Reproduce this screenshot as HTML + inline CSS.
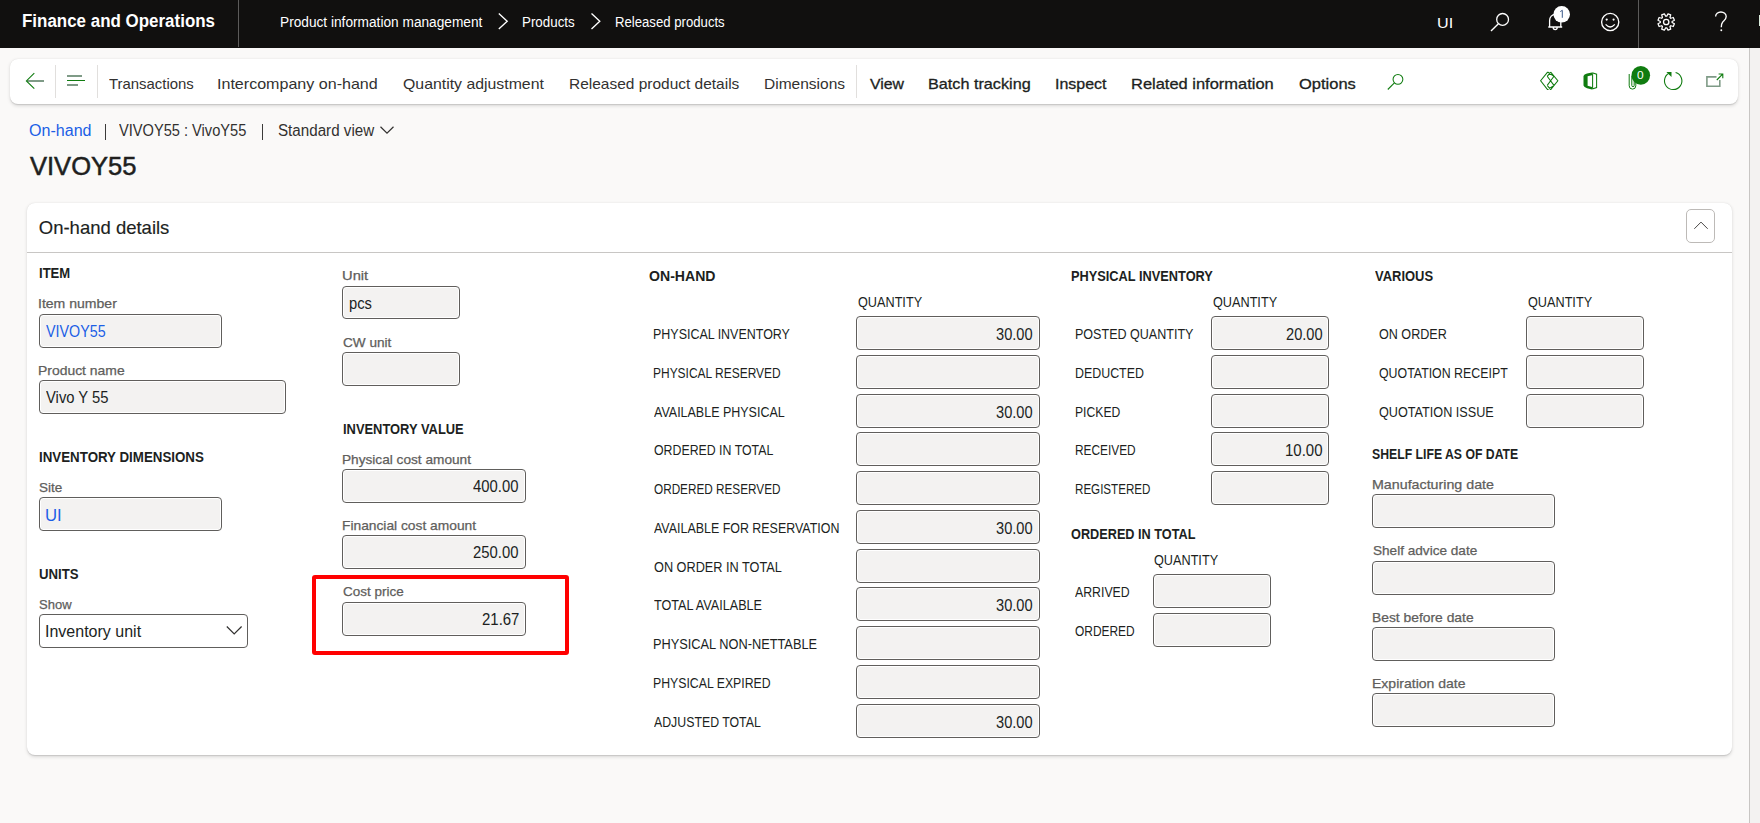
<!DOCTYPE html>
<html><head><meta charset="utf-8"><title>On-hand</title>
<style>
html,body{margin:0;padding:0;}
body{width:1760px;height:823px;overflow:hidden;position:relative;background:#faf9f8;font-family:"Liberation Sans", sans-serif;}
.t{position:absolute;line-height:0;white-space:pre;transform-origin:0 0;}
svg{z-index:6}
</style></head><body>
<div style="position:absolute;left:0px;top:0px;width:1760px;height:48px;background:#11100f"></div>
<div style="position:absolute;left:238px;top:0px;width:1px;height:47px;background:#5c5b5a"></div>
<div style="position:absolute;left:1638px;top:0px;width:1px;height:48px;background:#5c5b5a"></div>
<div style="position:absolute;left:1758.6px;top:15px;width:1.4px;height:10.7px;background:#d8eadb"></div>
<div style="position:absolute;left:1749px;top:48px;width:1px;height:775px;background:#c8c6c4"></div>
<div style="position:absolute;left:1750px;top:48px;width:10px;height:775px;background:#f3f2f1"></div>
<div style="position:absolute;left:10px;top:58.5px;width:1728px;height:45.5px;background:#fff;border-radius:8px;box-shadow:0 1.6px 3.6px rgba(0,0,0,.13),0 0.3px 0.9px rgba(0,0,0,.11)"></div>
<div style="position:absolute;left:55px;top:65px;width:1px;height:33px;background:#e1dfdd"></div>
<div style="position:absolute;left:97px;top:65px;width:1px;height:33px;background:#e1dfdd"></div>
<div style="position:absolute;left:856px;top:65px;width:1px;height:33px;background:#e1dfdd"></div>
<div style="position:absolute;left:27px;top:80.1px;width:17px;height:1.6px;background:#7f9b87"></div>
<div style="position:absolute;left:67px;top:75.2px;width:14.8px;height:1.8px;background:#7f9b87"></div>
<div style="position:absolute;left:67px;top:80px;width:18px;height:1.1px;background:#107c10"></div>
<div style="position:absolute;left:67px;top:84.1px;width:11.3px;height:1.8px;background:#7f9b87"></div>
<div style="position:absolute;left:105px;top:124px;width:1.2px;height:16px;background:#3b3a39"></div>
<div style="position:absolute;left:262px;top:124px;width:1.2px;height:16px;background:#3b3a39"></div>
<div style="position:absolute;left:27px;top:203px;width:1705px;height:552px;background:#fff;border-radius:8px;box-shadow:0 1.6px 3.6px rgba(0,0,0,.13),0 0.3px 0.9px rgba(0,0,0,.11)"></div>
<div style="position:absolute;left:27px;top:252px;width:1705px;height:1px;background:#c8c6c4"></div>
<div style="position:absolute;left:1686px;top:209px;width:29px;height:34px;border:1px solid #bdbab7;border-radius:5px;box-sizing:border-box"></div>
<div style="position:absolute;left:39px;top:314px;width:183px;height:34px;background:#f3f2f1;border:1px solid #605e5c;border-radius:4px;box-sizing:border-box;box-shadow:inset 0 0 0 1px #fff"></div>
<div style="position:absolute;left:39px;top:380px;width:247px;height:34px;background:#f3f2f1;border:1px solid #605e5c;border-radius:4px;box-sizing:border-box;box-shadow:inset 0 0 0 1px #fff"></div>
<div style="position:absolute;left:39px;top:497px;width:183px;height:34px;background:#f3f2f1;border:1px solid #605e5c;border-radius:4px;box-sizing:border-box;box-shadow:inset 0 0 0 1px #fff"></div>
<div style="position:absolute;left:39px;top:614px;width:209px;height:34px;background:#fff;border:1px solid #605e5c;border-radius:4px;box-sizing:border-box;box-shadow:inset 0 0 0 1px #fff"></div>
<div style="position:absolute;left:342px;top:286px;width:118px;height:33px;background:#f3f2f1;border:1px solid #605e5c;border-radius:4px;box-sizing:border-box;box-shadow:inset 0 0 0 1px #fff"></div>
<div style="position:absolute;left:342px;top:352px;width:118px;height:34px;background:#f3f2f1;border:1px solid #605e5c;border-radius:4px;box-sizing:border-box;box-shadow:inset 0 0 0 1px #fff"></div>
<div style="position:absolute;left:342px;top:469px;width:184px;height:34px;background:#f3f2f1;border:1px solid #605e5c;border-radius:4px;box-sizing:border-box;box-shadow:inset 0 0 0 1px #fff"></div>
<div style="position:absolute;left:342px;top:535px;width:184px;height:34px;background:#f3f2f1;border:1px solid #605e5c;border-radius:4px;box-sizing:border-box;box-shadow:inset 0 0 0 1px #fff"></div>
<div style="position:absolute;left:342px;top:602px;width:184px;height:34px;background:#f3f2f1;border:1px solid #605e5c;border-radius:4px;box-sizing:border-box;box-shadow:inset 0 0 0 1px #fff"></div>
<div style="position:absolute;left:312.2px;top:575.2px;width:256.5px;height:79.4px;border:4.3px solid #ff0000;border-radius:3px;box-sizing:border-box;z-index:8"></div>
<div style="position:absolute;left:856px;top:316px;width:184px;height:34px;background:#f3f2f1;border:1px solid #605e5c;border-radius:4px;box-sizing:border-box;box-shadow:inset 0 0 0 1px #fff"></div>
<div style="position:absolute;left:856px;top:355px;width:184px;height:34px;background:#f3f2f1;border:1px solid #605e5c;border-radius:4px;box-sizing:border-box;box-shadow:inset 0 0 0 1px #fff"></div>
<div style="position:absolute;left:856px;top:394px;width:184px;height:34px;background:#f3f2f1;border:1px solid #605e5c;border-radius:4px;box-sizing:border-box;box-shadow:inset 0 0 0 1px #fff"></div>
<div style="position:absolute;left:856px;top:432px;width:184px;height:34px;background:#f3f2f1;border:1px solid #605e5c;border-radius:4px;box-sizing:border-box;box-shadow:inset 0 0 0 1px #fff"></div>
<div style="position:absolute;left:856px;top:471px;width:184px;height:34px;background:#f3f2f1;border:1px solid #605e5c;border-radius:4px;box-sizing:border-box;box-shadow:inset 0 0 0 1px #fff"></div>
<div style="position:absolute;left:856px;top:510px;width:184px;height:34px;background:#f3f2f1;border:1px solid #605e5c;border-radius:4px;box-sizing:border-box;box-shadow:inset 0 0 0 1px #fff"></div>
<div style="position:absolute;left:856px;top:549px;width:184px;height:34px;background:#f3f2f1;border:1px solid #605e5c;border-radius:4px;box-sizing:border-box;box-shadow:inset 0 0 0 1px #fff"></div>
<div style="position:absolute;left:856px;top:587px;width:184px;height:34px;background:#f3f2f1;border:1px solid #605e5c;border-radius:4px;box-sizing:border-box;box-shadow:inset 0 0 0 1px #fff"></div>
<div style="position:absolute;left:856px;top:626px;width:184px;height:34px;background:#f3f2f1;border:1px solid #605e5c;border-radius:4px;box-sizing:border-box;box-shadow:inset 0 0 0 1px #fff"></div>
<div style="position:absolute;left:856px;top:665px;width:184px;height:34px;background:#f3f2f1;border:1px solid #605e5c;border-radius:4px;box-sizing:border-box;box-shadow:inset 0 0 0 1px #fff"></div>
<div style="position:absolute;left:856px;top:704px;width:184px;height:34px;background:#f3f2f1;border:1px solid #605e5c;border-radius:4px;box-sizing:border-box;box-shadow:inset 0 0 0 1px #fff"></div>
<div style="position:absolute;left:1211px;top:316px;width:118px;height:34px;background:#f3f2f1;border:1px solid #605e5c;border-radius:4px;box-sizing:border-box;box-shadow:inset 0 0 0 1px #fff"></div>
<div style="position:absolute;left:1211px;top:355px;width:118px;height:34px;background:#f3f2f1;border:1px solid #605e5c;border-radius:4px;box-sizing:border-box;box-shadow:inset 0 0 0 1px #fff"></div>
<div style="position:absolute;left:1211px;top:394px;width:118px;height:34px;background:#f3f2f1;border:1px solid #605e5c;border-radius:4px;box-sizing:border-box;box-shadow:inset 0 0 0 1px #fff"></div>
<div style="position:absolute;left:1211px;top:432px;width:118px;height:34px;background:#f3f2f1;border:1px solid #605e5c;border-radius:4px;box-sizing:border-box;box-shadow:inset 0 0 0 1px #fff"></div>
<div style="position:absolute;left:1211px;top:471px;width:118px;height:34px;background:#f3f2f1;border:1px solid #605e5c;border-radius:4px;box-sizing:border-box;box-shadow:inset 0 0 0 1px #fff"></div>
<div style="position:absolute;left:1153px;top:574px;width:118px;height:34px;background:#f3f2f1;border:1px solid #605e5c;border-radius:4px;box-sizing:border-box;box-shadow:inset 0 0 0 1px #fff"></div>
<div style="position:absolute;left:1153px;top:613px;width:118px;height:34px;background:#f3f2f1;border:1px solid #605e5c;border-radius:4px;box-sizing:border-box;box-shadow:inset 0 0 0 1px #fff"></div>
<div style="position:absolute;left:1526px;top:316px;width:118px;height:34px;background:#f3f2f1;border:1px solid #605e5c;border-radius:4px;box-sizing:border-box;box-shadow:inset 0 0 0 1px #fff"></div>
<div style="position:absolute;left:1526px;top:355px;width:118px;height:34px;background:#f3f2f1;border:1px solid #605e5c;border-radius:4px;box-sizing:border-box;box-shadow:inset 0 0 0 1px #fff"></div>
<div style="position:absolute;left:1526px;top:394px;width:118px;height:34px;background:#f3f2f1;border:1px solid #605e5c;border-radius:4px;box-sizing:border-box;box-shadow:inset 0 0 0 1px #fff"></div>
<div style="position:absolute;left:1372px;top:494px;width:183px;height:34px;background:#f3f2f1;border:1px solid #605e5c;border-radius:4px;box-sizing:border-box;box-shadow:inset 0 0 0 1px #fff"></div>
<div style="position:absolute;left:1372px;top:561px;width:183px;height:34px;background:#f3f2f1;border:1px solid #605e5c;border-radius:4px;box-sizing:border-box;box-shadow:inset 0 0 0 1px #fff"></div>
<div style="position:absolute;left:1372px;top:627px;width:183px;height:34px;background:#f3f2f1;border:1px solid #605e5c;border-radius:4px;box-sizing:border-box;box-shadow:inset 0 0 0 1px #fff"></div>
<div style="position:absolute;left:1372px;top:693px;width:183px;height:34px;background:#f3f2f1;border:1px solid #605e5c;border-radius:4px;box-sizing:border-box;box-shadow:inset 0 0 0 1px #fff"></div>
<svg style="position:absolute;left:0;top:0;z-index:6" width="1760" height="823" viewBox="0 0 1760 823"><path d="M498.8 13.6 L507.2 21.3 L498.8 29 M591.5 13.6 L599.8 21.3 L591.5 29" fill="none" stroke="#ffffff" stroke-width="1.35"/><circle cx="1502.6" cy="19.4" r="5.9" fill="none" stroke="#ffffff" stroke-width="1.3"/><path d="M1498.4 23.7 L1491 31" stroke="#ffffff" stroke-width="1.4"/><path d="M1548.3 27 H1562.2 M1549.6 27 V20.5 A5.6 6.2 0 0 1 1560.8 20.5 V27 M1553.2 27.6 A2 2 0 0 0 1557.2 27.6" fill="none" stroke="#ffffff" stroke-width="1.3"/><circle cx="1561.7" cy="14.3" r="8.3" fill="#ffffff"/><path d="M1560.3 11.6 L1562.3 10.3 V17.8" fill="none" stroke="#3d5a8a" stroke-width="1"/><circle cx="1610.2" cy="22" r="8.6" fill="none" stroke="#ffffff" stroke-width="1.35"/><circle cx="1606.7" cy="19.6" r="1.1" fill="#ffffff"/><circle cx="1613.6" cy="19.6" r="1.1" fill="#ffffff"/><path d="M1605.6 24.4 Q1610.2 29.6 1614.8 24.4" fill="none" stroke="#ffffff" stroke-width="1.3"/><path d="M1666.77 16.13 L1668.02 13.80 L1670.71 14.92 L1669.95 17.45 L1670.75 18.25 L1673.28 17.49 L1674.40 20.18 L1672.07 21.43 L1672.07 22.57 L1674.40 23.82 L1673.28 26.51 L1670.75 25.75 L1669.95 26.55 L1670.71 29.08 L1668.02 30.20 L1666.77 27.87 L1665.63 27.87 L1664.38 30.20 L1661.69 29.08 L1662.45 26.55 L1661.65 25.75 L1659.12 26.51 L1658.00 23.82 L1660.33 22.57 L1660.33 21.43 L1658.00 20.18 L1659.12 17.49 L1661.65 18.25 L1662.45 17.45 L1661.69 14.92 L1664.38 13.80 L1665.63 16.13 Z" fill="none" stroke="#ffffff" stroke-width="1.25" stroke-linejoin="round"/><circle cx="1666.2" cy="22" r="2.7" fill="none" stroke="#ffffff" stroke-width="1.3"/><path d="M1715.6 16.6 A5.3 4.6 0 0 1 1726.2 16.6 C1726.2 19.6 1724 20.6 1722.6 22.2 C1721.6 23.4 1721.3 24.4 1721.3 27.2" fill="none" stroke="#ffffff" stroke-width="1.35"/><circle cx="1721.3" cy="30.2" r="0.95" fill="#ffffff"/><path d="M34.3 73.2 L26.4 80.9 L34.3 88.6" fill="none" stroke="#107c10" stroke-width="1.1"/><circle cx="1397.95" cy="79.3" r="4.9" fill="none" stroke="#107c10" stroke-width="1.05"/><path d="M1394.4 82.9 L1387.8 89.5" stroke="#107c10" stroke-width="1.1"/><path d="M1547.59 72.06 L1540.64 80.75 L1547.59 89.64 M1550.68 72.06 L1557.83 80.75 L1550.68 89.64 M1547.59 72.06 L1553.97 76.31 M1550.68 72.06 L1547.21 76.31 M1553.97 76.31 L1547.21 85.39 M1547.21 76.31 L1553.97 85.39 M1547.21 85.39 L1550.68 89.64 M1553.97 85.39 L1547.59 89.64" fill="none" stroke="#107c10" stroke-width="1.05"/><path d="M1583.5 76 Q1584 74.2 1587 73.5 L1592 72.4 V75.2 L1587.6 76.3 V85.8 L1592 87 V89.4 L1587 88.3 Q1584 87.2 1583.5 85.5 Z" fill="#107c10"/><path d="M1592.2 72.8 L1596.6 74.2 V87.6 L1592.2 88.9 M1592.6 73 V88.6" fill="none" stroke="#107c10" stroke-width="1.05"/><path d="M1629.2 74 V85.8 A3.3 3.3 0 0 0 1635.8 85.8 V78 M1631.8 76 V85.5 A1.2 1.2 0 0 0 1634.2 85.5 V80" fill="none" stroke="#107c10" stroke-width="1"/><circle cx="1640.8" cy="75.35" r="9.3" fill="#107c10"/><path d="M1675.6 72.5 A8.7 8.7 0 1 1 1670.6 72.55" fill="none" stroke="#107c10" stroke-width="1.1"/><path d="M1666.4 72.1 L1671.5 72.1 L1671.5 77 Z" fill="#107c10"/><path d="M1716.5 76.9 H1706.9 V86.2 H1719.8 V80" fill="none" stroke="#7f9b87" stroke-width="1.6"/><path d="M1716.8 80 L1722.6 74.2 M1718.6 74 H1722.8 V78.2" fill="none" stroke="#107c10" stroke-width="1.1"/><path d="M380.5 126.8 L387 133.2 L393.5 126.8" fill="none" stroke="#323130" stroke-width="1.2"/><path d="M1694.3 228.8 L1701 222.1 L1707.7 228.8" fill="none" stroke="#4a4846" stroke-width="1"/><path d="M226.8 626.5 L234.2 633.9 L241.6 626.5" fill="none" stroke="#323130" stroke-width="1.2"/></svg>
<div class="t" style="font-weight:700;font-size:17.5px;color:#ffffff;top:21.00px;z-index:5;left:22.28px;transform:scaleX(0.9682);">Finance and Operations</div>
<div class="t" style="font-weight:400;font-size:14px;color:#ffffff;top:22.00px;z-index:5;left:279.52px;transform:scaleX(0.9776);">Product information management</div>
<div class="t" style="font-weight:400;font-size:14px;color:#ffffff;top:22.00px;z-index:5;left:522.30px;transform:scaleX(0.9540);">Products</div>
<div class="t" style="font-weight:400;font-size:14px;color:#ffffff;top:22.00px;z-index:5;left:614.81px;transform:scaleX(0.9396);">Released products</div>
<div class="t" style="font-weight:400;font-size:15px;color:#ffffff;top:23.00px;z-index:5;left:1436.92px;transform:scaleX(1.0754);">UI</div>
<div class="t" style="font-weight:400;font-size:15px;color:#323130;top:84.00px;z-index:5;left:109.40px;transform:scaleX(0.9940);">Transactions</div>
<div class="t" style="font-weight:400;font-size:15px;color:#323130;top:84.00px;z-index:5;left:217.43px;transform:scaleX(1.0709);">Intercompany on-hand</div>
<div class="t" style="font-weight:400;font-size:15px;color:#323130;top:84.00px;z-index:5;left:403.25px;transform:scaleX(1.0560);">Quantity adjustment</div>
<div class="t" style="font-weight:400;font-size:15px;color:#323130;top:84.00px;z-index:5;left:569.47px;transform:scaleX(1.0315);">Released product details</div>
<div class="t" style="font-weight:400;font-size:15px;color:#323130;top:84.00px;z-index:5;left:763.97px;transform:scaleX(1.0343);">Dimensions</div>
<div class="t" style="font-weight:400;font-size:15px;color:#201f1e;top:84.00px;z-index:5;left:870.00px;transform:scaleX(1.0568);-webkit-text-stroke:0.3px #201f1e;">View</div>
<div class="t" style="font-weight:400;font-size:15px;color:#201f1e;top:84.00px;z-index:5;left:928.17px;transform:scaleX(1.0805);-webkit-text-stroke:0.3px #201f1e;">Batch tracking</div>
<div class="t" style="font-weight:400;font-size:15px;color:#201f1e;top:84.00px;z-index:5;left:1054.69px;transform:scaleX(1.0634);-webkit-text-stroke:0.3px #201f1e;">Inspect</div>
<div class="t" style="font-weight:400;font-size:15px;color:#201f1e;top:84.00px;z-index:5;left:1130.90px;transform:scaleX(1.0973);-webkit-text-stroke:0.3px #201f1e;">Related information</div>
<div class="t" style="font-weight:400;font-size:15px;color:#201f1e;top:84.00px;z-index:5;left:1298.75px;transform:scaleX(1.0988);-webkit-text-stroke:0.3px #201f1e;">Options</div>
<div class="t" style="font-weight:400;font-size:11px;color:#ffffff;top:75.20px;z-index:7;left:1637.20px;transform:scaleX(1.0833);">0</div>
<div class="t" style="font-weight:400;font-size:15.8px;color:#1b5fe6;top:131.25px;z-index:5;left:28.75px;transform:scaleX(1.0175);">On-hand</div>
<div class="t" style="font-weight:400;font-size:15.8px;color:#323130;top:131.25px;z-index:5;left:119.25px;transform:scaleX(0.9253);">VIVOY55 : VivoY55</div>
<div class="t" style="font-weight:400;font-size:15.8px;color:#323130;top:131.25px;z-index:5;left:277.50px;transform:scaleX(0.9608);">Standard view</div>
<div class="t" style="font-weight:400;font-size:25px;color:#201f1e;top:165.50px;z-index:5;left:29.50px;transform:scaleX(1.0211);-webkit-text-stroke:0.5px #201f1e;">VIVOY55</div>
<div class="t" style="font-weight:400;font-size:18.5px;color:#201f1e;top:228.00px;z-index:5;left:38.75px;-webkit-text-stroke:0.15px #201f1e;">On-hand details</div>
<div class="t" style="font-weight:700;font-size:14px;color:#201f1e;top:272.75px;z-index:5;left:39.40px;transform:scaleX(0.9335);">ITEM</div>
<div class="t" style="font-weight:400;font-size:13px;color:#605e5c;top:304.20px;z-index:5;left:38.12px;transform:scaleX(1.0806);-webkit-text-stroke:0.25px #605e5c;">Item number</div>
<div class="t" style="font-weight:400;font-size:15.8px;color:#1b5fe6;top:332.00px;z-index:5;left:45.70px;transform:scaleX(0.9051);">VIVOY55</div>
<div class="t" style="font-weight:400;font-size:13px;color:#605e5c;top:371.00px;z-index:5;left:38.13px;transform:scaleX(1.0702);-webkit-text-stroke:0.25px #605e5c;">Product name</div>
<div class="t" style="font-weight:400;font-size:15.8px;color:#201f1e;top:398.40px;z-index:5;left:45.80px;transform:scaleX(0.9357);">Vivo Y 55</div>
<div class="t" style="font-weight:700;font-size:14px;color:#201f1e;top:457.20px;z-index:5;left:38.90px;transform:scaleX(0.9519);">INVENTORY DIMENSIONS</div>
<div class="t" style="font-weight:400;font-size:13px;color:#605e5c;top:488.20px;z-index:5;left:39.00px;transform:scaleX(1.0374);-webkit-text-stroke:0.25px #605e5c;">Site</div>
<div class="t" style="font-weight:400;font-size:15.8px;color:#1b5fe6;top:516.00px;z-index:5;left:44.74px;transform:scaleX(1.0591);">UI</div>
<div class="t" style="font-weight:700;font-size:14px;color:#201f1e;top:574.10px;z-index:5;left:39.00px;transform:scaleX(0.9433);">UNITS</div>
<div class="t" style="font-weight:400;font-size:13px;color:#605e5c;top:605.10px;z-index:5;left:39.00px;-webkit-text-stroke:0.25px #605e5c;">Show</div>
<div class="t" style="font-weight:400;font-size:15.8px;color:#201f1e;top:631.90px;z-index:5;left:44.79px;transform:scaleX(1.0133);">Inventory unit</div>
<div class="t" style="font-weight:400;font-size:13px;color:#605e5c;top:275.90px;z-index:5;left:341.67px;transform:scaleX(1.1330);-webkit-text-stroke:0.25px #605e5c;">Unit</div>
<div class="t" style="font-weight:400;font-size:15.8px;color:#201f1e;top:304.00px;z-index:5;left:348.67px;transform:scaleX(0.9331);">pcs</div>
<div class="t" style="font-weight:400;font-size:13px;color:#605e5c;top:342.80px;z-index:5;left:342.80px;transform:scaleX(1.0468);-webkit-text-stroke:0.25px #605e5c;">CW unit</div>
<div class="t" style="font-weight:700;font-size:14px;color:#201f1e;top:429.40px;z-index:5;left:343.10px;transform:scaleX(0.9216);">INVENTORY VALUE</div>
<div class="t" style="font-weight:400;font-size:13px;color:#605e5c;top:460.10px;z-index:5;left:341.75px;transform:scaleX(1.0497);-webkit-text-stroke:0.25px #605e5c;">Physical cost amount</div>
<div class="t" style="font-weight:400;font-size:15.8px;color:#201f1e;top:487.00px;z-index:5;left:473.40px;transform:scaleX(0.9396);">400.00</div>
<div class="t" style="font-weight:400;font-size:13px;color:#605e5c;top:526.20px;z-index:5;left:341.74px;transform:scaleX(1.0601);-webkit-text-stroke:0.25px #605e5c;">Financial cost amount</div>
<div class="t" style="font-weight:400;font-size:15.8px;color:#201f1e;top:553.30px;z-index:5;left:473.40px;transform:scaleX(0.9396);">250.00</div>
<div class="t" style="font-weight:400;font-size:13px;color:#605e5c;top:592.00px;z-index:5;left:342.80px;transform:scaleX(1.0362);-webkit-text-stroke:0.25px #605e5c;">Cost price</div>
<div class="t" style="font-weight:400;font-size:15.8px;color:#201f1e;top:620.30px;z-index:5;left:482.30px;transform:scaleX(0.9472);">21.67</div>
<div class="t" style="font-weight:700;font-size:14px;color:#201f1e;top:276.00px;z-index:5;left:649.30px;transform:scaleX(1.0062);">ON-HAND</div>
<div class="t" style="font-weight:400;font-size:14px;color:#201f1e;top:302.30px;z-index:5;left:857.80px;transform:scaleX(0.9056);">QUANTITY</div>
<div class="t" style="font-weight:400;font-size:14px;color:#201f1e;top:334.20px;z-index:5;left:652.61px;transform:scaleX(0.8904);">PHYSICAL INVENTORY</div>
<div class="t" style="font-weight:400;font-size:15.8px;color:#201f1e;top:335.00px;z-index:5;left:996.00px;transform:scaleX(0.9259);">30.00</div>
<div class="t" style="font-weight:400;font-size:14px;color:#201f1e;top:373.20px;z-index:5;left:652.65px;transform:scaleX(0.8549);">PHYSICAL RESERVED</div>
<div class="t" style="font-weight:400;font-size:14px;color:#201f1e;top:412.20px;z-index:5;left:653.50px;transform:scaleX(0.8919);">AVAILABLE PHYSICAL</div>
<div class="t" style="font-weight:400;font-size:15.8px;color:#201f1e;top:413.00px;z-index:5;left:996.00px;transform:scaleX(0.9259);">30.00</div>
<div class="t" style="font-weight:400;font-size:14px;color:#201f1e;top:450.20px;z-index:5;left:653.50px;transform:scaleX(0.8813);">ORDERED IN TOTAL</div>
<div class="t" style="font-weight:400;font-size:14px;color:#201f1e;top:489.20px;z-index:5;left:653.50px;transform:scaleX(0.8396);">ORDERED RESERVED</div>
<div class="t" style="font-weight:400;font-size:14px;color:#201f1e;top:528.20px;z-index:5;left:653.50px;transform:scaleX(0.8880);">AVAILABLE FOR RESERVATION</div>
<div class="t" style="font-weight:400;font-size:15.8px;color:#201f1e;top:529.00px;z-index:5;left:996.00px;transform:scaleX(0.9259);">30.00</div>
<div class="t" style="font-weight:400;font-size:14px;color:#201f1e;top:567.20px;z-index:5;left:653.50px;transform:scaleX(0.9082);">ON ORDER IN TOTAL</div>
<div class="t" style="font-weight:400;font-size:14px;color:#201f1e;top:605.20px;z-index:5;left:653.50px;transform:scaleX(0.9016);">TOTAL AVAILABLE</div>
<div class="t" style="font-weight:400;font-size:15.8px;color:#201f1e;top:606.00px;z-index:5;left:996.00px;transform:scaleX(0.9259);">30.00</div>
<div class="t" style="font-weight:400;font-size:14px;color:#201f1e;top:644.20px;z-index:5;left:652.59px;transform:scaleX(0.9129);">PHYSICAL NON-NETTABLE</div>
<div class="t" style="font-weight:400;font-size:14px;color:#201f1e;top:683.20px;z-index:5;left:652.62px;transform:scaleX(0.8772);">PHYSICAL EXPIRED</div>
<div class="t" style="font-weight:400;font-size:14px;color:#201f1e;top:722.20px;z-index:5;left:653.50px;transform:scaleX(0.8799);">ADJUSTED TOTAL</div>
<div class="t" style="font-weight:400;font-size:15.8px;color:#201f1e;top:723.00px;z-index:5;left:996.00px;transform:scaleX(0.9259);">30.00</div>
<div class="t" style="font-weight:700;font-size:14px;color:#201f1e;top:276.20px;z-index:5;left:1071.30px;transform:scaleX(0.9133);">PHYSICAL INVENTORY</div>
<div class="t" style="font-weight:400;font-size:14px;color:#201f1e;top:302.40px;z-index:5;left:1213.00px;transform:scaleX(0.9056);">QUANTITY</div>
<div class="t" style="font-weight:400;font-size:14px;color:#201f1e;top:334.20px;z-index:5;left:1074.70px;transform:scaleX(0.8954);">POSTED QUANTITY</div>
<div class="t" style="font-weight:400;font-size:15.8px;color:#201f1e;top:335.00px;z-index:5;left:1285.80px;transform:scaleX(0.9259);">20.00</div>
<div class="t" style="font-weight:400;font-size:14px;color:#201f1e;top:373.20px;z-index:5;left:1074.71px;transform:scaleX(0.8856);">DEDUCTED</div>
<div class="t" style="font-weight:400;font-size:14px;color:#201f1e;top:412.20px;z-index:5;left:1074.73px;transform:scaleX(0.8684);">PICKED</div>
<div class="t" style="font-weight:400;font-size:14px;color:#201f1e;top:450.20px;z-index:5;left:1074.75px;transform:scaleX(0.8473);">RECEIVED</div>
<div class="t" style="font-weight:400;font-size:15.8px;color:#201f1e;top:451.00px;z-index:5;left:1284.85px;transform:scaleX(0.9498);">10.00</div>
<div class="t" style="font-weight:400;font-size:14px;color:#201f1e;top:489.20px;z-index:5;left:1074.77px;transform:scaleX(0.8287);">REGISTERED</div>
<div class="t" style="font-weight:700;font-size:14px;color:#201f1e;top:533.90px;z-index:5;left:1071.30px;transform:scaleX(0.9077);">ORDERED IN TOTAL</div>
<div class="t" style="font-weight:400;font-size:14px;color:#201f1e;top:559.70px;z-index:5;left:1154.30px;transform:scaleX(0.9056);">QUANTITY</div>
<div class="t" style="font-weight:400;font-size:14px;color:#201f1e;top:591.70px;z-index:5;left:1075.40px;transform:scaleX(0.8789);">ARRIVED</div>
<div class="t" style="font-weight:400;font-size:14px;color:#201f1e;top:630.70px;z-index:5;left:1075.40px;transform:scaleX(0.8527);">ORDERED</div>
<div class="t" style="font-weight:700;font-size:14px;color:#201f1e;top:276.00px;z-index:5;left:1375.20px;transform:scaleX(0.9261);">VARIOUS</div>
<div class="t" style="font-weight:400;font-size:14px;color:#201f1e;top:302.10px;z-index:5;left:1527.80px;transform:scaleX(0.9056);">QUANTITY</div>
<div class="t" style="font-weight:400;font-size:14px;color:#201f1e;top:334.20px;z-index:5;left:1378.90px;transform:scaleX(0.8986);">ON ORDER</div>
<div class="t" style="font-weight:400;font-size:14px;color:#201f1e;top:373.20px;z-index:5;left:1378.90px;transform:scaleX(0.8833);">QUOTATION RECEIPT</div>
<div class="t" style="font-weight:400;font-size:14px;color:#201f1e;top:412.20px;z-index:5;left:1378.90px;transform:scaleX(0.9037);">QUOTATION ISSUE</div>
<div class="t" style="font-weight:700;font-size:14px;color:#201f1e;top:454.00px;z-index:5;left:1372.20px;transform:scaleX(0.8745);">SHELF LIFE AS OF DATE</div>
<div class="t" style="font-weight:400;font-size:13px;color:#605e5c;top:484.50px;z-index:5;left:1371.90px;transform:scaleX(1.0957);-webkit-text-stroke:0.25px #605e5c;">Manufacturing date</div>
<div class="t" style="font-weight:400;font-size:13px;color:#605e5c;top:550.70px;z-index:5;left:1373.00px;transform:scaleX(1.0452);-webkit-text-stroke:0.25px #605e5c;">Shelf advice date</div>
<div class="t" style="font-weight:400;font-size:13px;color:#605e5c;top:617.50px;z-index:5;left:1371.93px;transform:scaleX(1.0651);-webkit-text-stroke:0.25px #605e5c;">Best before date</div>
<div class="t" style="font-weight:400;font-size:13px;color:#605e5c;top:683.50px;z-index:5;left:1371.92px;transform:scaleX(1.0785);-webkit-text-stroke:0.25px #605e5c;">Expiration date</div>
</body></html>
